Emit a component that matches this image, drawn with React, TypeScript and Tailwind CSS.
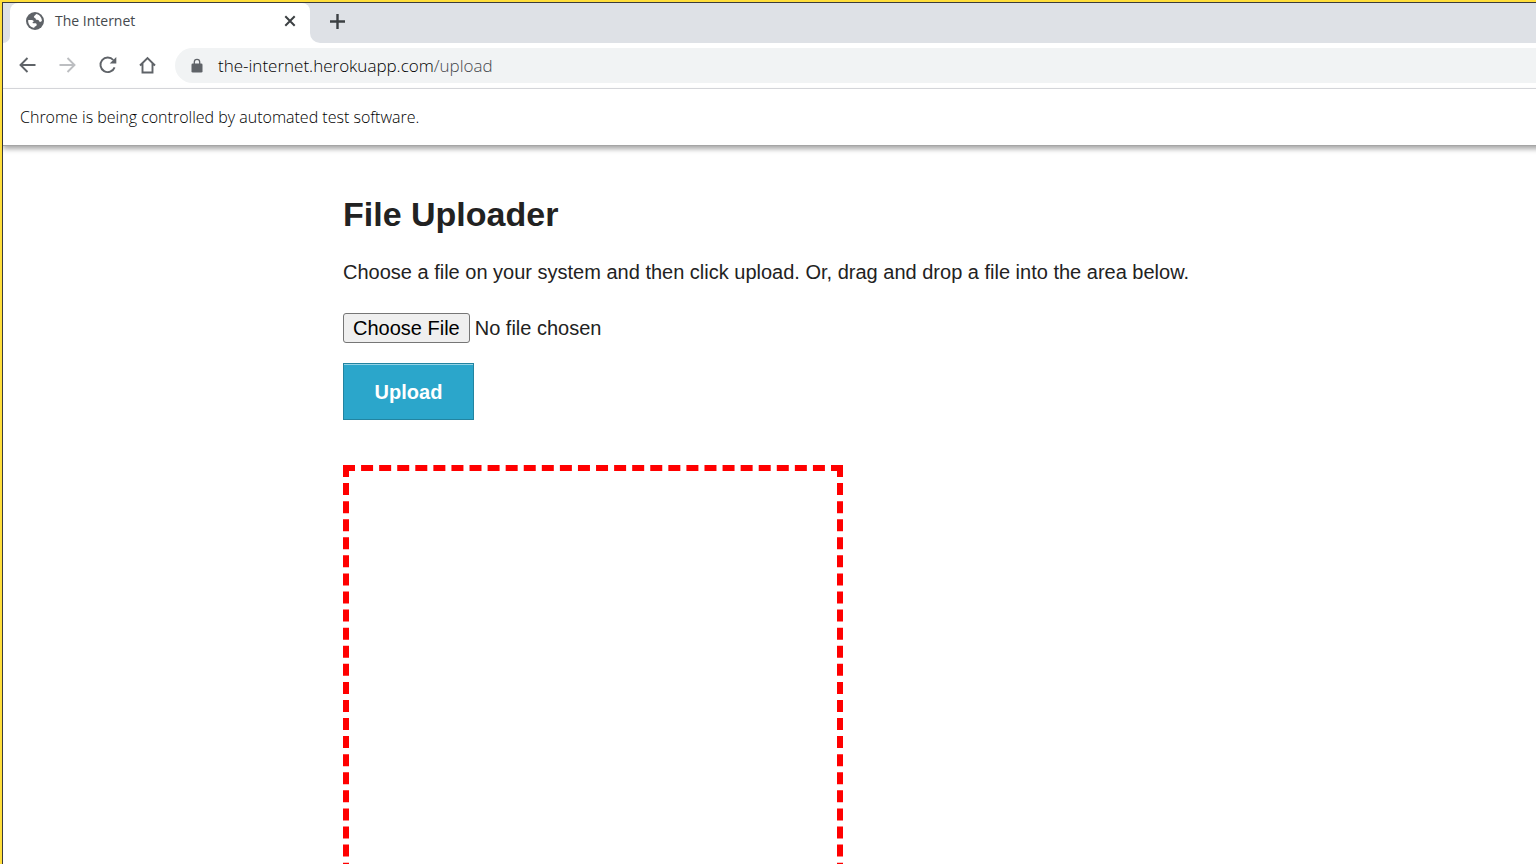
import { useId, useState } from "react";

function GlobeIcon() {
  return (
    <svg width="18" height="18" viewBox="0 0 18 18" aria-hidden="true">
      <circle cx="9" cy="9" r="9" fill="#5f6368" />
      <path
        d="M10 2.1C9.7 3.4 8.6 3.6 8 4.4c-.4.6 0 1.2.8 1.4.9.3.6 1.2 1.2 1.8.6.5 1.8.2 2.6.7.6.4.4 1.2 1 1.500.7.3 1.600 0 2.300-.7.1-3.300-2.400-6.500-5.900-7z"
        fill="#fff"
      />
      <path
        d="M2.200 7.900C1.800 11.800 4.200 15.200 8.300 15.900c-.2-.8.2-1.300.9-1.500 1.200-.3 1.500-1 1.500-1.900 0-.8-.8-1.300-1.600-1.300H7.200c-.5 0-.6-.5-.6-1 .8-.1 1.200-.5 1-1.100C7.200 8.100 6.300 7.900 5.200 7.900z"
        fill="#fff"
      />
    </svg>
  );
}

function BackIcon() {
  return (
    <svg width="20" height="20" viewBox="0 0 20 20" fill="none" stroke="currentColor" strokeWidth="1.900" aria-hidden="true">
      <path d="M17.500 10H3M9.500 3L2.500 10l7 7" />
    </svg>
  );
}

function ForwardIcon() {
  return (
    <svg width="20" height="20" viewBox="0 0 20 20" fill="none" stroke="currentColor" strokeWidth="1.900" aria-hidden="true">
      <path d="M1.500 10H16M9.500 3l7 7-7 7" />
    </svg>
  );
}

function ReloadIcon() {
  return (
    <svg width="20" height="20" viewBox="0 0 20 20" fill="none" aria-hidden="true">
      <path d="M15.300 5A7.300 7.300 0 1 0 16.600 12.300" stroke="currentColor" strokeWidth="1.900" />
      <path d="M18.300 1.900v6.600h-6.600z" fill="currentColor" />
    </svg>
  );
}

function HomeIcon() {
  return (
    <svg width="20" height="20" viewBox="0 0 20 20" fill="none" stroke="currentColor" strokeWidth="1.900" aria-hidden="true">
      <path d="M2 10.500L9.500 3l7.500 7.500M4.500 8.500V17.500h10V8.500" />
    </svg>
  );
}

function LockIcon() {
  return (
    <svg width="12" height="16" viewBox="0 0 12 16" fill="none" aria-hidden="true">
      <rect x="0.500" y="5.500" width="11" height="9" rx="1.300" fill="#5f6368" />
      <path d="M3.300 6V4a2.700 2.700 0 0 1 5.400 0v2" stroke="#5f6368" strokeWidth="1.300" />
    </svg>
  );
}

function TabStrip() {
  return (
    <div className="flex h-10 bg-[#dee1e6]">
      <div className="w-[7px] bg-white">
        <div className="h-full rounded-br-[8px] bg-[#dee1e6]" />
      </div>
      <div className="flex w-[300px] items-center rounded-t-[8px] bg-white pb-1 pl-4 pr-3">
        <GlobeIcon />
        <span className="ml-[11px] flex-1 text-[14px] leading-5 text-[#45494d]">The Internet</span>
        <button type="button" aria-label="Close tab" className="flex size-4 items-center justify-center">
          <svg width="12" height="12" viewBox="0 0 12 12" stroke="#3c4043" strokeWidth="2" aria-hidden="true">
            <path d="M1.300 1.300l9.400 9.400M10.700 1.300l-9.400 9.400" />
          </svg>
        </button>
      </div>
      <div className="flex-1 bg-white">
        <div className="flex h-full items-center rounded-bl-[10px] bg-[#dee1e6] pb-1 pl-[19px]">
          <button type="button" aria-label="New tab" className="flex size-4 items-center justify-center">
            <svg width="16" height="16" viewBox="0 0 16 16" stroke="#3c4043" strokeWidth="2.400" aria-hidden="true">
              <path d="M8.500 1v15M1 8.500h15" />
            </svg>
          </button>
        </div>
      </div>
    </div>
  );
}

function Toolbar() {
  return (
    <div className="flex h-[46px] items-center border-b border-[#dadce0] pl-[15px] text-[#5f6368]">
      <nav aria-label="Browser" className="flex gap-5 pb-0.5">
        <button type="button" aria-label="Back"><BackIcon /></button>
        <button type="button" aria-label="Forward" disabled className="text-[#bcbec1]"><ForwardIcon /></button>
        <button type="button" aria-label="Reload"><ReloadIcon /></button>
        <button type="button" aria-label="Home"><HomeIcon /></button>
      </nav>
      <div className="ml-[17px] flex h-[35px] flex-1 items-center rounded-l-full bg-[#f1f3f4] pl-4">
        <LockIcon />
        <a href="#upload" className="ml-[15px] text-[17px] font-light leading-6 text-[#45484c]">
          <span className="text-black">the-internet.herokuapp.com</span>/upload
        </a>
      </div>
    </div>
  );
}

function Uploader() {
  const inputId = useId();
  const [fileName, setFileName] = useState("No file chosen");
  return (
    <main className="flex-1 overflow-hidden bg-white pl-[340px] pr-8 pt-11 font-['Liberation_Sans',Arial,sans-serif] text-[20px] leading-8 text-[#222]">
      <h1 className="text-[34px] font-bold leading-[48px]">File Uploader</h1>
      <p className="mt-[18px]">
        Choose a file on your system and then click upload. Or, drag and drop a file into the area below.
      </p>
      <form className="mt-[25px]" onSubmit={(event) => event.preventDefault()}>
        <label htmlFor={inputId} className="flex w-fit items-center gap-[5px] leading-7">
          <input
            id={inputId}
            type="file"
            className="sr-only"
            onChange={(event) => setFileName(event.target.files?.[0]?.name ?? "No file chosen")}
          />
          <span className="rounded-[3px] border border-[#767676] bg-[#efefef] px-[9px] text-black">Choose File</span>
          <span>{fileName}</span>
        </label>
        <button
          type="submit"
          className="mt-5 block h-[57px] w-[131px] border border-[#2284a1] bg-[#2ba6cb] font-bold leading-8 text-white shadow-[inset_0_1px_0_#95d3e5]"
        >
          Upload
        </button>
      </form>
      <div className="mt-[45px] size-[500px] border-[6px] border-dashed border-[#ff0000]" />
    </main>
  );
}

export default function App() {
  return (
    <div className="h-screen overflow-hidden border-l-2 border-t-2 border-[#ffde3b] font-['Open_Sans','Noto_Sans',sans-serif]">
      <div className="flex h-full flex-col border-l border-t border-[#3b3b3b] bg-white">
        <TabStrip />
        <Toolbar />
        <div className="relative -mr-2 flex h-[57px] items-center border-b border-[#a5a5a5] pl-[17px] text-[16px] font-light leading-6 text-black shadow-[0_3px_5px_rgba(0,0,0,0.35)]">
          Chrome is being controlled by automated test software.
        </div>
        <Uploader />
      </div>
    </div>
  );
}
